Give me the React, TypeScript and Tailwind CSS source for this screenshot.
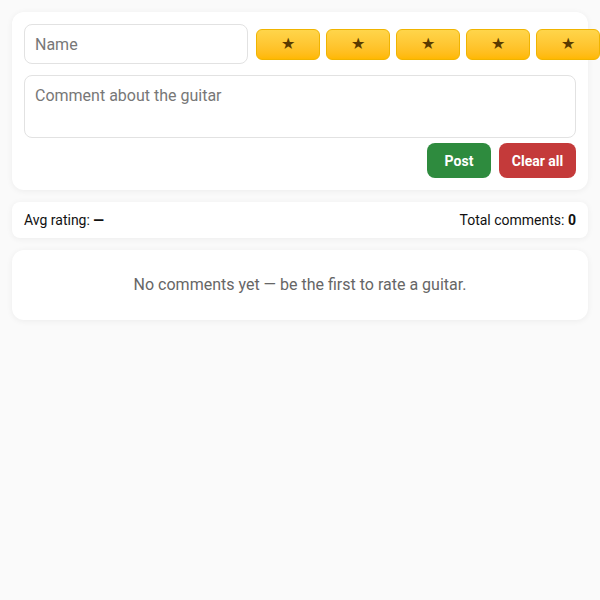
import React from "react";

export default function App() {
  const stars = [1, 2, 3, 4, 5];
  return (
    <div className="min-h-[600px] w-[600px] bg-[#fafafa] p-3 flex flex-col gap-3" style={{ fontFamily: "Roboto, 'Liberation Sans', sans-serif" }}>
      <div className="bg-white rounded-xl shadow-[0_1px_6px_rgba(0,0,0,0.06)] p-3 flex flex-col gap-[11px]">
        <div className="flex items-center gap-[8px]">
          <input
            placeholder="Name"
            className="w-[224px] shrink-0 h-10 rounded-lg border border-[#e2e2e2] px-[10px] text-base text-[#333] placeholder-[#777] outline-none"
          />
          <div className="flex gap-[6px]">
            {stars.map((s) => (
              <button
                key={s}
                className="w-16 h-[31px] shrink-0 rounded-md border border-[#f0b400] bg-gradient-to-b from-[#ffd54a] to-[#ffb800] text-[#5a3a00] text-base leading-none flex items-center justify-center"
              >
                ★
              </button>
            ))}
          </div>
        </div>
        <textarea
          placeholder="Comment about the guitar"
          className="w-full h-[63px] rounded-lg border border-[#e2e2e2] px-[10px] py-[8px] text-base text-[#333] placeholder-[#777] outline-none resize-none block"
        />
        <div className="flex justify-end gap-2 -mt-[6px]">
          <button className="h-[35px] w-16 rounded-lg bg-[#2e8b3e] text-white text-sm font-bold">Post</button>
          <button className="h-[35px] w-[77px] rounded-lg bg-[#c43a3a] text-white text-sm font-bold">Clear all</button>
        </div>
      </div>
      <div className="bg-white rounded-lg shadow-[0_1px_6px_rgba(0,0,0,0.06)] h-9 px-3 flex items-center justify-between text-sm text-[#111]">
        <span>
          Avg rating: <b>—</b>
        </span>
        <span>
          Total comments: <b>0</b>
        </span>
      </div>
      <div className="bg-white rounded-xl shadow-[0_1px_6px_rgba(0,0,0,0.06)] h-[70px] flex items-center justify-center text-base text-[#666]">
        No comments yet — be the first to rate a guitar.
      </div>
    </div>
  );
}
